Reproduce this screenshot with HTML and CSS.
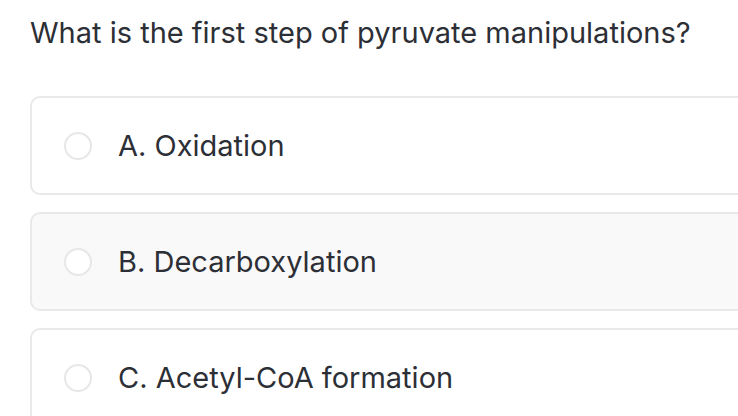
FILE: index.html
```html
<!DOCTYPE html>
<html lang="en">
<head>
  <meta charset="UTF-8">
  <title>Question</title>
  <link rel="stylesheet" href="styles.css">
</head>
<body>
  <div class="question">
    <h1>What is the first step of pyruvate manipulations?</h1>
    <div class="options">
      <label class="option">
        <span class="radio"></span>
        <span class="text">A. Oxidation</span>
      </label>
      <label class="option option-hover">
        <span class="radio"></span>
        <span class="text">B. Decarboxylation</span>
      </label>
      <label class="option">
        <span class="radio"></span>
        <span class="text">C. Acetyl-CoA formation</span>
      </label>
    </div>
  </div>
</body>
</html>
```

FILE: styles.css
```css
body {
  margin: 0;
  font-family: 'Inter', 'Lato', sans-serif;
  color: #2d2f36;
  background-color: #fff;
  overflow: hidden;
}
.question {
  padding: 12px 0 0 30px;
  width: 780px;
}
h1 {
  margin: 0;
  font-size: 29px;
  font-weight: normal;
  line-height: 42px;
}
.options {
  display: flex;
  flex-direction: column;
  gap: 17px;
  margin-top: 42px;
}
.option {
  display: flex;
  align-items: center;
  height: 95px;
  padding-left: 32px;
  border: 2px solid #e9e9eb;
  border-radius: 10px;
  background-color: #fff;
}
.option-hover {
  background-color: #f9f9f9;
}
.radio {
  width: 24px;
  height: 24px;
  border: 2px solid #e7e7e9;
  border-radius: 50%;
  background-color: #fff;
  flex-shrink: 0;
}
.text {
  margin-left: 26px;
  font-size: 29px;
}
```
